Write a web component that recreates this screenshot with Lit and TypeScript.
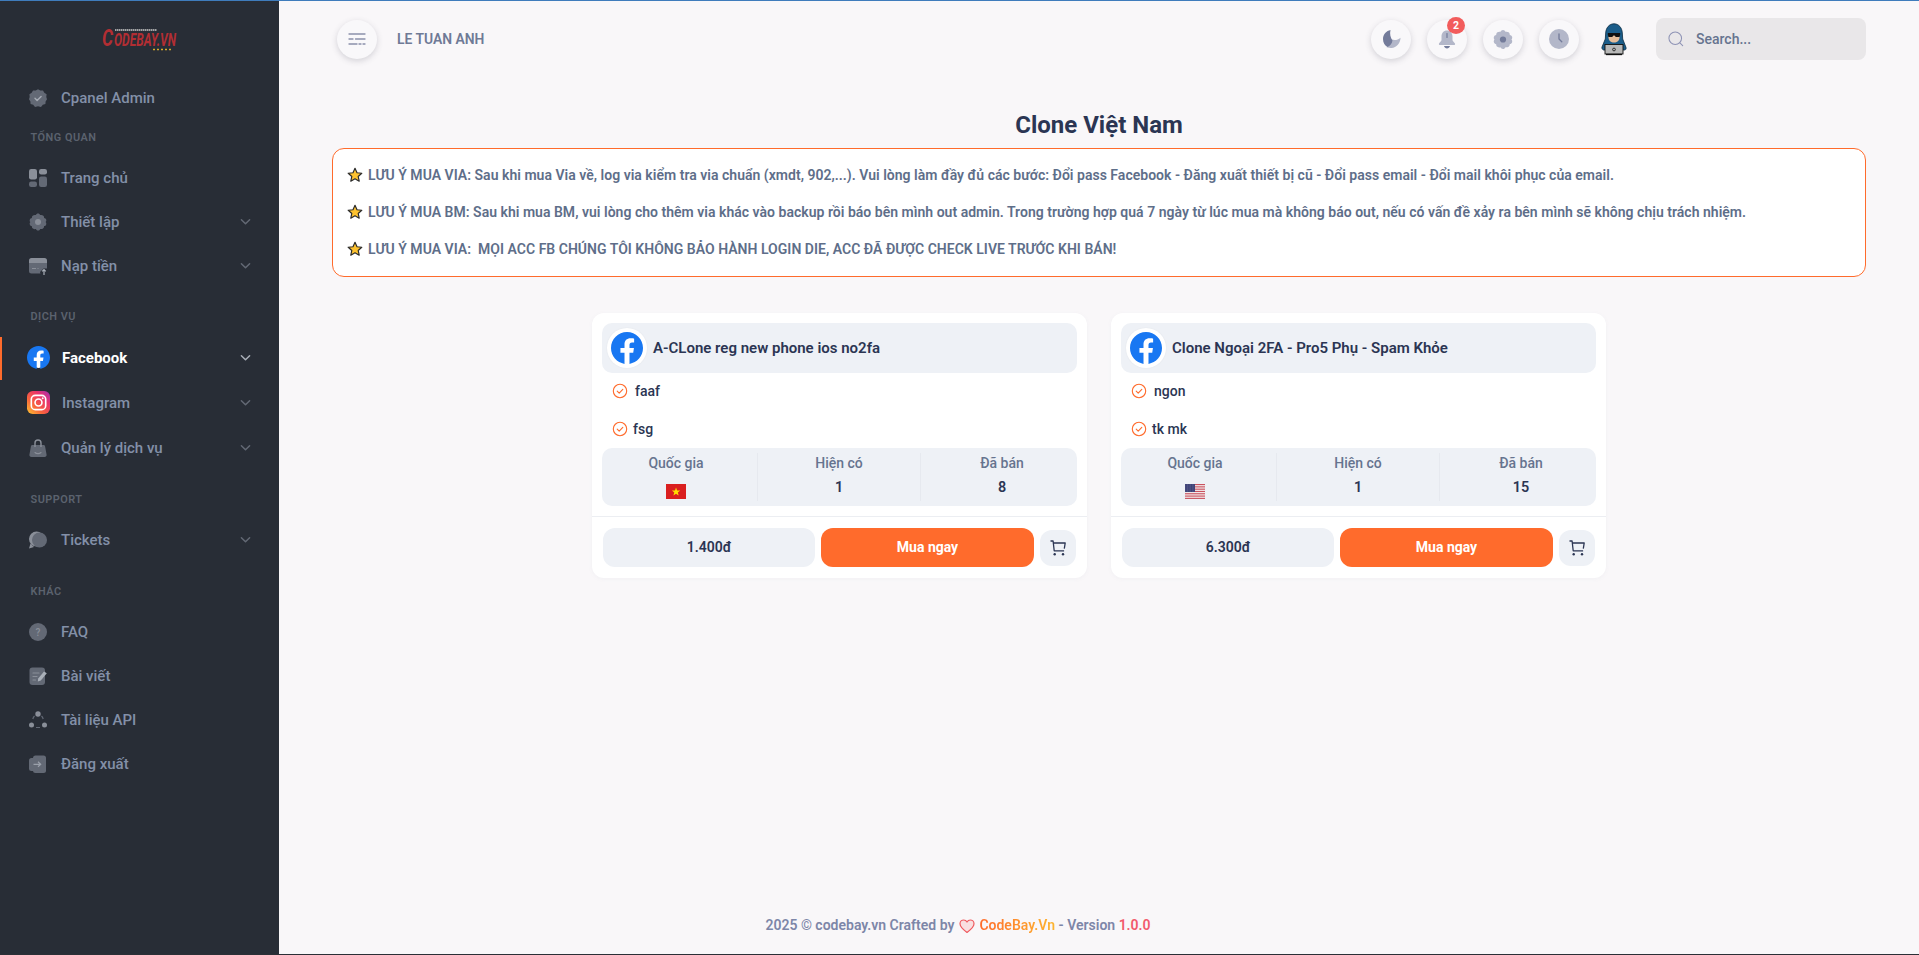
import { LitElement, html, css, svg } from "lit";
import { customElement } from "lit/decorators.js";

const FB = html`<svg class="fb" viewBox="0 0 24 24"><circle cx="12" cy="12" r="11" fill="#fff"/><path fill="#1877f2" d="M24 12.073c0-6.627-5.373-12-12-12s-12 5.373-12 12c0 5.99 4.388 10.954 10.125 11.854v-8.385H7.078v-3.47h3.047V9.43c0-3.007 1.792-4.669 4.533-4.669 1.312 0 2.686.235 2.686.235v2.953H15.83c-1.491 0-1.956.925-1.956 1.874v2.25h3.328l-.532 3.47h-2.796v8.385C19.612 23.027 24 18.062 24 12.073z"/></svg>`;

const IG = html`<svg class="brand" viewBox="0 0 24 24"><defs><linearGradient id="ig" x1="0" y1="1" x2="1" y2="0"><stop offset="0" stop-color="#fdc830"/><stop offset=".35" stop-color="#f9643c"/><stop offset=".7" stop-color="#e8336c"/><stop offset="1" stop-color="#a431b8"/></linearGradient></defs><rect width="24" height="24" rx="6" fill="url(#ig)"/><rect x="4.5" y="4.5" width="15" height="15" rx="4.2" fill="none" stroke="#fff" stroke-width="1.7"/><circle cx="12" cy="12" r="3.6" fill="none" stroke="#fff" stroke-width="1.7"/><circle cx="16.4" cy="7.6" r="1" fill="#fff"/></svg>`;

const C1 = "#636975";
const C2 = "#8a8f99";
const GEAR = "M9 .5c1 0 1.8.7 2.2 1.6.9-.3 2-.2 2.8.4.8.5 1.2 1.5 1.1 2.4 1 .1 1.8.8 2.1 1.7.3 1 0 2-.6 2.4.6.6.9 1.5.6 2.4-.3 1-1.1 1.6-2.1 1.7.1 1-.3 1.9-1.1 2.4-.8.6-1.9.7-2.8.4C10.8 16.8 10 17.500 9 17.500s-1.800-.7-2.200-1.500c-.9.3-2 .2-2.800-.4-.8-.5-1.200-1.400-1.100-2.400-1-.1-1.800-.7-2.100-1.700-.3-.9 0-1.800.6-2.400-.6-.4-.9-1.400-.6-2.400.3-.9 1.100-1.600 2.100-1.700C2.800 4 3.200 3 4 2.500c.8-.6 1.900-.7 2.800-.4C7.200 1.200 8 .5 9 .5z";
const ICONS: Record<string, unknown> = {
  badge: svg`<path fill="${C1}" d="M9 .2l2.300 1.300 2.700-.1 1.300 2.400 2.300 1.400-.3 2.700L18 10.200l-1.400 2.200-.2 2.700-2.600.7L12 18l-3-.7-3 .7-1.800-2.200-2.600-.7-.2-2.700L0 10.200l.7-2.300L.4 5.200l2.300-1.400L4 1.400l2.700.1z"/><path d="M6 9.300l2.100 2.100 4-4" fill="none" stroke="#a6abb4" stroke-width="1.400" stroke-linecap="round" stroke-linejoin="round"/>`,
  apps: svg`<rect x="0" y="0" width="8" height="10.5" rx="2.2" fill="#8a8f99"/><rect x="10" y="0" width="8" height="5.5" rx="2.2" fill="#8a8f99"/><rect x="0" y="12.5" width="8" height="5.5" rx="2.2" fill="${C1}"/><rect x="10" y="7.5" width="8" height="10.5" rx="2.2" fill="${C1}"/>`,
  gear: svg`<path fill="${C1}" d="${GEAR}"/><circle cx="9" cy="9" r="3" fill="${C2}"/>`,
  card: svg`<path fill="#8a8f99" d="M2.500 1h13A2.500 2.500 0 0 1 18 3.500V6H0V3.500A2.500 2.500 0 0 1 2.500 1z"/><path fill="${C1}" d="M0 6h18v5.500h-3.500l-3.500 3.500 .5 1.500H2.500A2.500 2.500 0 0 1 0 14z"/><path d="M3 11.500h4M8.500 11.500h1" stroke="#8a8f99" stroke-width="1.200"/><path d="M15 18v-5.500M13.200 14.300l1.800-1.800 1.800 1.800" fill="none" stroke="#aab0b9" stroke-width="1.200"/>`,
  bag: svg`<path fill="${C1}" d="M3.500 6h11c.9 0 1.500.6 1.600 1.400l1.500 8.300c.2 1.200-.7 2.300-2 2.300H2.400c-1.300 0-2.200-1.100-2-2.300l1.500-8.300C2 6.600 2.600 6 3.500 6z"/><path d="M6 8V4a3 3 0 0 1 6 0v4" fill="none" stroke="#8a8f99" stroke-width="1.400"/><path d="M6 13.500c1.500 1.500 4.500 1.500 6 0" fill="none" stroke="#8a8f99" stroke-width="1.100" stroke-linecap="round"/>`,
  chat: svg`<circle cx="7.500" cy="8" r="7.500" fill="#8a8f99"/><path fill="#8a8f99" d="M0 17.500l1.500-5 3.500 3.500z"/><circle cx="10.500" cy="9" r="7.500" fill="${C1}"/>`,
  help: svg`<circle cx="9" cy="9" r="9" fill="${C1}"/><text x="9" y="12.500" font-family="Roboto, sans-serif" font-size="10" font-weight="500" text-anchor="middle" fill="#8a8f99">?</text>`,
  note: svg`<rect x=".5" y=".5" width="15.500" height="17.500" rx="3" fill="${C1}"/><path d="M4 6h6M4 9.500h4M4 13h2.500" stroke="#8a8f99" stroke-width="1.200" stroke-linecap="round"/><path fill="#aab0b9" d="M15 4.500l2.800 1.700-6 7.300-3 1 .4-3z"/>`,
  dots: svg`<circle cx="9" cy="3" r="2.700" fill="#8a8f99"/><circle cx="2.500" cy="14" r="2.500" fill="#8a8f99"/><circle cx="15.500" cy="14" r="2.500" fill="#8a8f99"/><path d="M3.800 8a6.500 6.500 0 0 1 1.700-3M14.200 8a6.500 6.500 0 0 0-1.700-3M7 16.500h4" fill="none" stroke="${C1}" stroke-width="1.200"/>`,
  logout: svg`<rect x="0" y="3" width="9" height="13" rx="2.500" fill="${C1}"/><rect x="4" y=".5" width="13" height="17.500" rx="2.500" fill="${C1}"/><path d="M4.500 9.300h7M9 6.800l2.700 2.500L9 11.800" fill="none" stroke="#9aa0aa" stroke-width="1.200"/>`,
};

const chevron = html`<svg class="chev" viewBox="0 0 12 8"><path d="M1.500 1.500L6 6l4.500-4.500" fill="none" stroke="currentColor" stroke-width="1.600" stroke-linecap="round" stroke-linejoin="round"/></svg>`;
const icon = (n: string) => html`<svg class="ic" viewBox="0 0 18 18">${ICONS[n]}</svg>`;

type Entry = { t: "label"; text: string; h: number } | { t: "item"; text: string; ic: string; chev?: boolean; active?: boolean; brand?: unknown; tall?: boolean };
const NAV: Entry[] = [
  { t: "item", text: "Cpanel Admin", ic: "badge" },
  { t: "label", text: "TỔNG QUAN", h: 36 },
  { t: "item", text: "Trang chủ", ic: "apps" },
  { t: "item", text: "Thiết lập", ic: "gear", chev: true },
  { t: "item", text: "Nạp tiền", ic: "card", chev: true },
  { t: "label", text: "DỊCH VỤ", h: 47 },
  { t: "item", text: "Facebook", ic: "", chev: true, active: true, brand: FB, tall: true },
  { t: "item", text: "Instagram", ic: "", chev: true, brand: IG, tall: true },
  { t: "item", text: "Quản lý dịch vụ", ic: "bag", chev: true, tall: true },
  { t: "label", text: "SUPPORT", h: 48 },
  { t: "item", text: "Tickets", ic: "chat", chev: true },
  { t: "label", text: "KHÁC", h: 48 },
  { t: "item", text: "FAQ", ic: "help" },
  { t: "item", text: "Bài viết", ic: "note" },
  { t: "item", text: "Tài liệu API", ic: "dots" },
  { t: "item", text: "Đăng xuất", ic: "logout" },
];

const star = html`<svg class="star" viewBox="0 0 24 24"><path fill="#fdc22f" stroke="#2b2b2b" stroke-width="1.800" stroke-linejoin="round" d="M12 2l3 6.600 7.200.8-5.400 4.800 1.500 7.100L12 17.700l-6.300 3.600 1.500-7.100L1.800 9.400 9 8.600z"/></svg>`;
const check = html`<svg class="chk" viewBox="0 0 16 16"><circle cx="8" cy="8" r="6.700" fill="none" stroke="#ff6b2c" stroke-width="1.100"/><path d="M5.200 8.200l2 2 3.600-3.800" fill="none" stroke="#ff6b2c" stroke-width="1.100" stroke-linecap="round" stroke-linejoin="round"/></svg>`;
const cart = html`<svg class="cart" viewBox="0 0 16 16"><path d="M.5 1h2.600l1.100 9.800h9.900M3.400 3h11.800l-.9 5.600" fill="none" stroke="#2b3553" stroke-width="1.300" stroke-linejoin="round"/><circle cx="4.700" cy="14.200" r="1.200" fill="#2b3553"/><circle cx="13" cy="14.200" r="1.200" fill="#2b3553"/></svg>`;
const flagVN = html`<svg class="flag" viewBox="0 0 20 15"><rect width="20" height="15" fill="#da1f1f"/><path fill="#ffe000" d="M10 3.500l1.100 2.900 3.100.1-2.400 1.900.9 3-2.700-1.700-2.600 1.700.9-3-2.400-1.900 3.100-.1z"/></svg>`;
const flagUS = html`<svg class="flag" viewBox="0 0 20 15"><rect width="20" height="15" fill="#f4f0f0"/>${[0, 2, 4, 6, 8, 10, 12].map(i => svg`<rect y="${i * 1.15}" width="20" height="1.150" fill="#c9525f"/>`)}<rect width="10" height="8" fill="#3a3f74"/>${[1, 3, 5, 7].map(y => svg`<path d="M.5 ${y}H9.500" stroke="#8e90b5" stroke-width=".6" stroke-dasharray=".8 .8"/>`)}</svg>`;

const CARDS = [
  { title: "A-CLone reg new phone ios no2fa", a: "faaf", b: "fsg", flag: flagVN, have: "1", sold: "8", price: "1.400đ" },
  { title: "Clone Ngoại 2FA - Pro5 Phụ - Spam Khỏe", a: "ngon", b: "tk mk", flag: flagUS, have: "1", sold: "15", price: "6.300đ" },
];

@customElement("app-root")
export class AppRoot extends LitElement {
  static styles = css`
    :host { display: block; font-family: Roboto, "Noto Sans", sans-serif; }
    * { box-sizing: border-box; }
    .page { display: flex; height: 955px; overflow: hidden; background: #f9f7f9; border-top: 1px solid #3f7cbc; border-bottom: 1px solid #2b2f36; }
    .side { width: 279px; flex: none; background: #282d36; display: flex; flex-direction: column; }
    .logo { height: 54px; padding: 20px 0 0 99px; flex: none; }
    .logo svg { display: block; width: 82px; height: 34px; overflow: visible; }
    .nav { display: flex; flex-direction: column; padding-top: 21px; }
    .item { height: 44px; display: flex; align-items: center; padding-left: 29px; padding-right: 28px; color: #8390a8; font-size: 15px; font-weight: 500; flex: none; position: relative; }
    .item.tall { height: 45px; }
    .item .name { flex: 1; margin-left: 14px; }
    .item.brandrow { padding-left: 27px; }
    .item.brandrow .name { margin-left: 12px; }
    .item.active { color: #fff; font-weight: 700; }
    .item.active::before { content: ""; position: absolute; left: 0; top: 2px; bottom: 0; width: 2px; background: #ff6b2c; }
    .ic { width: 18px; height: 18px; flex: none; display: block; }
    .brand, .item .fb { width: 23px; height: 23px; flex: none; display: block; }
    .chev { width: 11px; height: 8px; color: #636975; flex: none; }
    .active .chev { color: #aab0b9; }
    .label { display: flex; align-items: flex-end; padding: 0 0 0 30.500px; color: #5b626e; font-size: 10.900px; font-weight: 600; letter-spacing: .5px; flex: none; }
    .lb { line-height: 14px; padding-bottom: 11px; }
    .main { flex: 1; min-width: 0; display: flex; flex-direction: column; padding: 0 53px; }
    .hdr { height: 76px; display: flex; align-items: center; flex: none; padding: 0 0 0 5px; }
    .rbtn { width: 40px; height: 39px; border-radius: 50%; background: #f9f8fa; box-shadow: 0 2px 6px rgba(60, 60, 80, .2); display: flex; align-items: center; justify-content: center; position: relative; flex: none; }
    .user { margin-left: 20px; font-size: 13.900px; font-weight: 600; color: #6f7a96; padding-bottom: 1px; }
    .spacer { flex: 1; }
    .tools { display: flex; align-items: center; gap: 16px; }
    .rbtn svg { display: block; }
    .badge { position: absolute; top: -3px; right: 2px; width: 18px; height: 17px; border-radius: 50%; background: #f25c5c; color: #fff; font-size: 10.500px; font-weight: 700; display: flex; align-items: center; justify-content: center; }
    .avatar { width: 26px; height: 33px; display: block; margin: 0 29px 0 22px; flex: none; }
    .search { width: 210px; height: 42px; border-radius: 8px; background: #e9e7e9; display: flex; align-items: center; padding-left: 12px; gap: 12px; color: #66748f; font-size: 14px; font-weight: 500; flex: none; }
    .search svg { width: 16px; height: 16px; flex: none; }
    h1 { margin: 0; height: 71px; padding-top: 34px; text-align: center; font-size: 24px; line-height: 28px; font-weight: 700; color: #2b3553; flex: none; }
    .notice { background: #fff; border: 1px solid #ff6b2c; border-radius: 12px; height: 129px; padding: 8px 14px 0 14px; flex: none; }
    .ln { display: flex; align-items: center; height: 36.800px; gap: 5px; color: #5e6e89; font-size: 14px; font-weight: 600; white-space: pre; letter-spacing: .02px; }
    .star { width: 16px; height: 16px; flex: none; }
    .cards { display: flex; justify-content: center; gap: 24px; padding-top: 36px; flex: none; }
    .card { width: 495px; height: 265px; border-radius: 12px; background: #fff; box-shadow: 0 1px 4px rgba(120, 130, 150, .06); padding: 10px 0 0; display: flex; flex-direction: column; }
    .head { margin: 0 10px; height: 50px; border-radius: 10px; background: #eef1f6; display: flex; align-items: center; padding-left: 5px; gap: 6px; font-size: 15px; font-weight: 600; color: #2b3553; flex: none; }
    .logoc { width: 40px; height: 40px; border-radius: 50%; background: #fff; display: flex; align-items: center; justify-content: center; box-shadow: 0 0 2px rgba(0,0,0,.06); flex: none; }
    .logoc .fb { width: 32px; height: 32px; display: block; }
    .feat { margin: 0 10px; flex: none; height: 38px; display: flex; align-items: center; padding-left: 10px; gap: 5px; font-size: 14px; font-weight: 500; color: #2b3553; }
    .feat.a { height: 37px; gap: 7px; padding-bottom: 1px; }
    .feat.b { height: 38px; }
    .chk { width: 16px; height: 16px; flex: none; }
    .stats { margin: 0 10px; flex: none; height: 58px; border-radius: 10px; background: #eef1f6; padding: 5px 0; }
    .grid { margin: 0 -7px; display: grid; grid-template-columns: 162px 163px 163px; height: 48px; }
    .st { display: flex; flex-direction: column; align-items: center; gap: 6px; }
    .st + .st { border-left: 1px solid #e6e9ef; }
    .st .k { font-size: 14px; line-height: 20px; font-weight: 500; color: #66748f; }
    .st .v { font-size: 14.400px; line-height: 18px; font-weight: 600; color: #2b3553; }
    .flag { width: 20px; height: 15px; display: block; margin-top: 5px; flex: none; }
    .foot { margin-top: 10px; border-top: 1px solid #eceef2; padding: 11px 11px 0; display: flex; align-items: flex-start; gap: 6px; flex: none; }
    .price { width: 212px; height: 39px; border-radius: 12px; background: #eef1f6; display: flex; align-items: center; justify-content: center; font-size: 14px; font-weight: 600; color: #2b3553; flex: none; padding-bottom: 1px; }
    .buy { width: 213px; height: 39px; border-radius: 12px; background: #ff6b2c; display: flex; align-items: center; justify-content: center; font-size: 14px; font-weight: 700; color: #fff; flex: none; padding-bottom: 1px; }
    .cartb { width: 36px; height: 36px; margin-top: 2px; border-radius: 12px; background: #eef1f6; display: flex; align-items: center; justify-content: center; flex: none; }
    .cart { width: 16px; height: 16px; }
    .ftr { margin-top: auto; height: 38px; padding-right: 282px; display: flex; align-items: flex-start; justify-content: center; gap: 4px; font-size: 14px; font-weight: 600; color: #7d86a8; line-height: 18px; flex: none; }
    .ftr svg { width: 16px; height: 16px; margin: 2px 0 0 1px; }
    .brandt { background: linear-gradient(90deg, #ff6b2c, #fdb52f); -webkit-background-clip: text; background-clip: text; color: transparent; }
    .ver { color: #f25c6c; }
  `;

  render() {
    return html`<div class="page">
      <aside class="side">
        <div class="logo">
          <svg viewBox="0 0 82 34">
            <path d="M16 9h42" stroke="#c9c9c9" stroke-width="1.600" stroke-dasharray="1.500 .5"/>
            <text x="3" y="25" font-family="Roboto, sans-serif" font-size="24" font-style="italic" font-weight="700" fill="#b22e33" textLength="11" lengthAdjust="spacingAndGlyphs">C</text>
            <text x="15" y="25" font-family="Roboto, sans-serif" font-size="18" font-style="italic" font-weight="700" fill="#b22e33" textLength="62" lengthAdjust="spacingAndGlyphs">ODEBAY.VN</text>
            <path d="M54 28.500h18" stroke="#d8ac2b" stroke-width="1.500" stroke-dasharray="2 2"/>
          </svg>
        </div>
        <nav class="nav">
          ${NAV.map(e => e.t === "label"
            ? html`<div class="label" style="height:${e.h}px"><span class="lb">${e.text}</span></div>`
            : html`<div class="item ${e.active ? "active" : ""} ${e.brand ? "brandrow" : ""} ${e.tall ? "tall" : ""}">
                ${e.brand ? e.brand : icon(e.ic)}
                <span class="name">${e.text}</span>
                ${e.chev ? chevron : ""}
              </div>`)}
        </nav>
      </aside>
      <main class="main">
        <header class="hdr">
          <div class="rbtn">
            <svg width="18" height="14" viewBox="0 0 18 14"><path d="M1 2h16M1 7h4M7.500 7h9.500M1 12h8M11 12h2M15 12h2" stroke="#8a90ab" stroke-width="1.300" stroke-linecap="round"/></svg>
          </div>
          <div class="user">LE TUAN ANH</div>
          <div class="spacer"></div>
          <div class="tools">
            <div class="rbtn"><svg width="21" height="20" viewBox="0 0 20 20"><path fill="#b3b7c9" d="M10.500 10.500c2.500 1 6 .5 8.500-1.800C19 14 15 18.500 10 19c-3 .2-5-1-5-1 3-1 4.500-4 5.500-7.500z"/><path fill="#737b9a" d="M9 1C5 1.800 1.500 5.300 1.500 10c0 3.800 2 6.800 4.500 8 2.500-1.200 4.500-3.300 5-6.500C9 9 8 5 9 1z"/></svg></div>
            <div class="rbtn"><svg width="18" height="21" viewBox="0 0 18 20"><path fill="#b3b7c9" d="M9 1c3.500 0 5.500 2.700 5.500 6v3.500c0 1.200 2 2.400 2.500 3.500.3.800 0 1.500-1 1.500H2c-1 0-1.300-.7-1-1.500.5-1.100 2.500-2.300 2.500-3.500V7C3.500 3.700 5.500 1 9 1z"/><path d="M9 4v4" stroke="#737b9a" stroke-width="1.200" stroke-linecap="round"/><path fill="#737b9a" d="M6 16.500h6c-.4 1.500-1.600 2.500-3 2.500s-2.600-1-3-2.500z"/></svg><span class="badge">2</span></div>
            <div class="rbtn"><svg width="20" height="21" viewBox="0 0 18 18"><path fill="#b3b7c9" d="${GEAR}"/><circle cx="9" cy="9" r="2.800" fill="#737b9a"/></svg></div>
            <div class="rbtn"><svg width="20" height="20" viewBox="0 0 18 18"><circle cx="9" cy="9" r="9" fill="#b3b7c9"/><path d="M9 4.500V9l2.500 2.500" fill="none" stroke="#737b9a" stroke-width="1.200" stroke-linecap="round"/></svg></div>
          </div>
          <svg class="avatar" viewBox="0 0 26 33">
            <path fill="#1b5d8a" stroke="#0b2a40" stroke-width=".8" d="M13 .8c4.800 0 8 4 8.300 9.200l.4 6 3.300 8.500c.4 1.300-.3 2.500-1.500 2.500H2.500C1.300 26.500.6 25.300 1 24l3.300-8 .4-6C5 4.800 8.200.8 13 .8z"/>
            <path fill="#e6bd9a" d="M7.500 11h11v3.500c0 3-2.500 5-5.500 5s-5.500-2-5.500-5z"/>
            <path fill="#111" d="M6.800 10h12.400v1.500l-.6 2.500h-3.800l-1.300-1.500h-1l-1.300 1.500H7.400l-.6-2.500z"/>
            <rect x="4" y="21.500" width="18" height="9.500" fill="#b8b8b8" stroke="#111" stroke-width=".9"/>
            <circle cx="13" cy="26.500" r="1.400" fill="none" stroke="#111" stroke-width=".8"/>
            <path d="M5 31.500h16" stroke="#111" stroke-width="1.300"/>
          </svg>
          <div class="search"><svg viewBox="0 0 17 17"><circle cx="7.700" cy="7.700" r="6.700" fill="none" stroke="#8e93b5" stroke-width="1.100"/><path d="M12.600 12.600l3 3" stroke="#8e93b5" stroke-width="1.100" stroke-linecap="round"/></svg><span>Search...</span></div>
        </header>
        <h1>Clone Việt Nam</h1>
        <section class="notice">
          <div class="ln">${star}<span>LƯU Ý MUA VIA: Sau khi mua Via về, log via kiểm tra via chuẩn (xmdt, 902,...). Vui lòng làm đầy đủ các bước: Đổi pass Facebook - Đăng xuất thiết bị cũ - Đổi pass email - Đổi mail khôi phục của email.</span></div>
          <div class="ln">${star}<span>LƯU Ý MUA BM: Sau khi mua BM, vui lòng cho thêm via khác vào backup rồi báo bên mình out admin. Trong trường hợp quá 7 ngày từ lúc mua mà không báo out, nếu có vấn đề xảy ra bên mình sẽ không chịu trách nhiệm.</span></div>
          <div class="ln">${star}<span>LƯU Ý MUA VIA:  MỌI ACC FB CHÚNG TÔI KHÔNG BẢO HÀNH LOGIN DIE, ACC ĐÃ ĐƯỢC CHECK LIVE TRƯỚC KHI BÁN!</span></div>
        </section>
        <section class="cards">
          ${CARDS.map(c => html`<article class="card">
            <div class="head"><div class="logoc">${FB}</div><span>${c.title}</span></div>
            <div class="feat a">${check}<span>${c.a}</span></div>
            <div class="feat b">${check}<span>${c.b}</span></div>
            <div class="stats"><div class="grid">
              <div class="st"><span class="k">Quốc gia</span>${c.flag}</div>
              <div class="st"><span class="k">Hiện có</span><span class="v">${c.have}</span></div>
              <div class="st"><span class="k">Đã bán</span><span class="v">${c.sold}</span></div>
            </div></div>
            <div class="foot">
              <div class="price">${c.price}</div>
              <div class="buy">Mua ngay</div>
              <div class="cartb">${cart}</div>
            </div>
          </article>`)}
        </section>
        <footer class="ftr">
          <span>2025 © codebay.vn Crafted by</span>
          <svg viewBox="0 0 16 16"><path fill="#f9dfe0" stroke="#ef5a5f" stroke-width="1.200" stroke-linejoin="round" d="M8 14.500C4 11.500 1 9 1 5.800 1 3.500 2.800 2 4.700 2 6 2 7.300 2.700 8 4c.7-1.300 2-2 3.300-2C13.200 2 15 3.500 15 5.800c0 3.200-3 5.700-7 8.700z"/></svg>
          <span><span class="brandt">CodeBay.Vn</span> - Version <span class="ver">1.0.0</span></span>
        </footer>
      </main>
    </div>`;
  }
}
